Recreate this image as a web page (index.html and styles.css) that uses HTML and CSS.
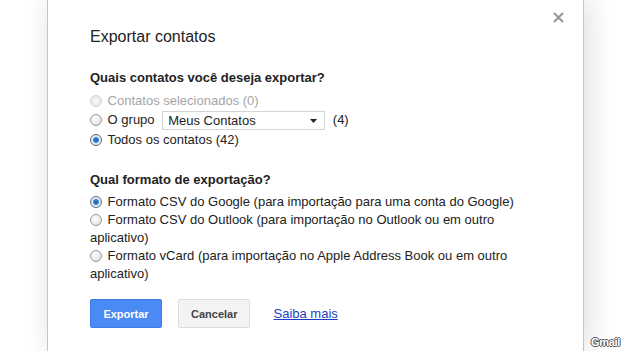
FILE: index.html
```html
<!DOCTYPE html>
<html lang="pt-BR">
<head>
  <meta charset="UTF-8">
  <title>Exportar contatos</title>
  <link rel="stylesheet" href="styles.css">
</head>
<body>
  <div class="page">
    <div class="dialog">
      <button class="close" title="Fechar">
        <svg width="11" height="11" viewBox="0 0 11 11"><path d="M1 1 L10 10 M10 1 L1 10" stroke="#9a9a9a" stroke-width="2.2" fill="none"/></svg>
      </button>

      <h2 class="title">Exportar contatos</h2>

      <h3 class="question">Quais contatos você deseja exportar?</h3>
      <div class="opts">
        <label class="opt disabled"><input type="radio" name="who" disabled> Contatos selecionados (0)</label>
        <label class="opt group"><input type="radio" name="who"> O grupo
          <span class="select">Meus Contatos
            <svg width="7" height="4" viewBox="0 0 7 4"><path d="M0 0 H7 L3.5 4 Z" fill="#222"/></svg>
          </span>
          (4)</label>
        <label class="opt"><input type="radio" name="who" checked> Todos os contatos (42)</label>
      </div>

      <h3 class="question second">Qual formato de exportação?</h3>
      <div class="opts formats">
        <label class="opt"><input type="radio" name="fmt" checked> Formato CSV do Google (para importação para uma conta do Google)</label>
        <label class="opt"><input type="radio" name="fmt"> Formato CSV do Outlook (para importação no Outlook ou em outro aplicativo)</label>
        <label class="opt"><input type="radio" name="fmt"> Formato vCard (para importação no Apple Address Book ou em outro aplicativo)</label>
      </div>

      <div class="actions">
        <button class="btn primary">Exportar</button>
        <button class="btn">Cancelar</button>
        <a class="more" href="#">Saiba mais</a>
      </div>
    </div>
    <div class="credit">Gmail</div>
  </div>
</body>
</html>
```

FILE: styles.css
```css
html, body { margin: 0; height: 100%; }
body {
  font-family: "Liberation Sans", Arial, sans-serif;
  font-size: 13px;
  color: #222;
  background: #fff;
  overflow: hidden;
}
.page { position: relative; height: 351px; overflow: hidden; }

.dialog {
  position: relative;
  box-sizing: border-box;
  width: 537px; height: 351px;
  margin-left: 47px;
  padding: 27px 42px 0 42px;
  background: #fff;
  border-left: 1px solid #c4c4c4;
  border-right: 1px solid #c4c4c4;
  box-shadow: 4px 0 28px rgba(0, 0, 0, 0.14);
}
.close {
  position: absolute; top: 12px; right: 19px;
  border: none; background: none; padding: 0; cursor: pointer;
  width: 11px; height: 11px; line-height: 0;
}
.title { margin: 0; font-size: 16px; font-weight: normal; line-height: 20px; color: #222; }
.question { margin: 22px 0 0; font-size: 13px; font-weight: bold; line-height: 18px; }
.question.second { margin-top: 22px; }

.opts { margin-top: 4px; }
.opt { display: block; line-height: 19px; }
.formats { max-width: 450px; }
.formats .opt { line-height: 18px; }
.opt.disabled { color: #a5a5a5; }
.opt.group { line-height: 20px; }

.opt input {
  -webkit-appearance: none; appearance: none;
  width: 12px; height: 12px; margin: 0 2px 0 0;
  vertical-align: -2px;
  border: 1px solid #9b9b9b; border-radius: 50%;
  box-sizing: border-box;
  background: radial-gradient(circle at 40% 35%, #fff 0, #e9e9e9 60%, #d2d2d2 100%);
}
.opt input:checked {
  border-color: #5d6d7e;
  background: radial-gradient(circle at 50% 50%, #1d5fae 0, #3b84d6 2.5px, #e8eef5 3.5px, #cfd8e2 100%);
}
.opt input:disabled { border-color: #cfcfcf; background: radial-gradient(circle, #f6f6f6 0, #e6e6e6 100%); }

.select {
  display: inline-flex; align-items: center; justify-content: space-between;
  box-sizing: border-box;
  width: 163px; height: 19px;
  margin: 0 4px 0 4px; padding: 0 7px 0 5px;
  vertical-align: middle;
  border: 1px solid #d4d4d4; background: #fff;
  line-height: 17px;
}

.actions { display: flex; align-items: center; margin-top: 16px; gap: 16px; }
.btn {
  font-family: inherit; font-size: 11px; font-weight: bold;
  height: 29px; min-width: 72px; padding: 0 12px;
  border-radius: 2px; border: 1px solid #dcdcdc;
  background: #f3f3f3; color: #444; cursor: pointer;
}
.btn.primary { background: #4a8af4; border-color: #3c7ce6; color: #fff; }
.more { margin-left: 7px; color: #1a3fc4; font-size: 13px; text-decoration: underline; }

.credit {
  position: absolute; right: 5px; bottom: 3px;
  font-size: 11px; font-weight: bold; color: #fff; letter-spacing: -0.3px;
  text-shadow: -1px 0 #555, 1px 0 #555, 0 -1px #555, 0 1px #555;
}
```
